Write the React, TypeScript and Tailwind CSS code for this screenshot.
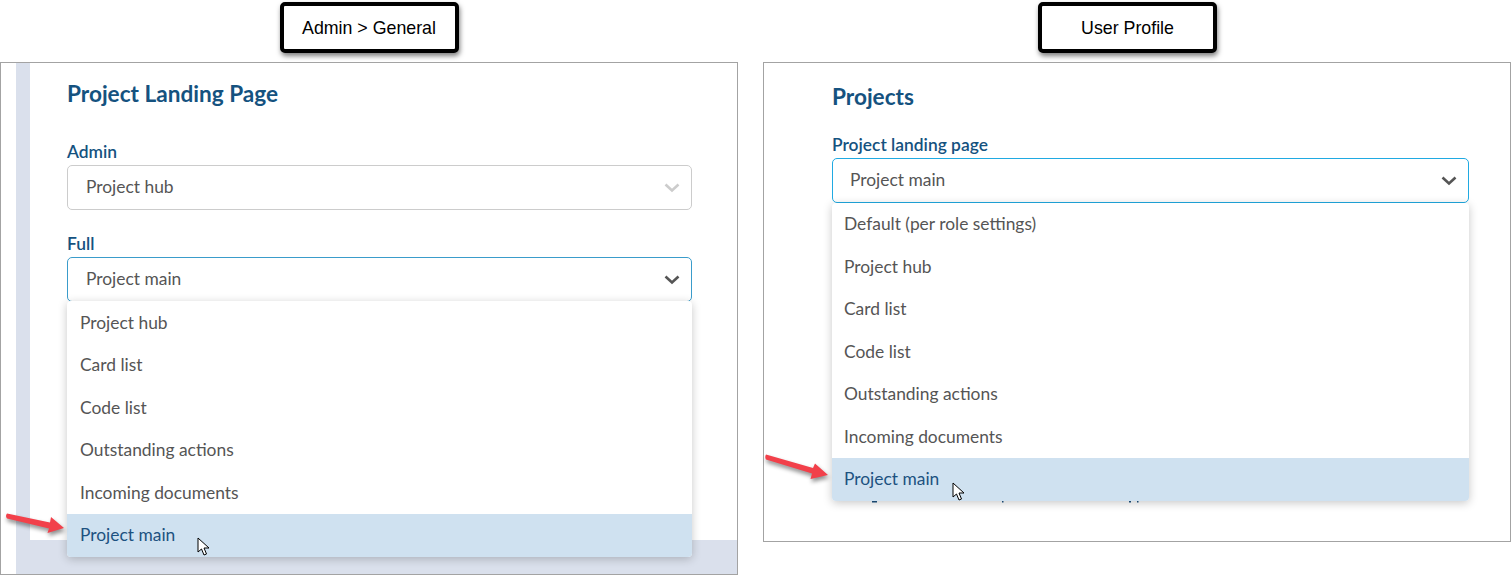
import { ReactNode } from 'react';

function Chevron({ className }: { className: string }) {
  return (
    <svg className={className} width="16" height="10" viewBox="0 0 16 10" fill="none" stroke="currentColor" strokeWidth={2.6}>
      <path d="M1.5 1.5 L8 7.5 L14.5 1.5" />
    </svg>
  );
}

// hand-drawn red annotation arrow
function RedArrow({ className, d }: { className: string; d: string }) {
  return (
    <svg className={`drop-shadow-[1px_3px_2px_rgba(0,0,0,0.45)] ${className}`} width="66" height="32" viewBox="0 0 66 32">
      <path d={d} fill="#f2404a" />
    </svg>
  );
}

function Cursor({ className }: { className: string }) {
  return (
    <svg className={className} width="14" height="20" viewBox="0 0 14 20">
      <path d="M1 1 L1 15 L4.5 12 L7 18 L9.5 17 L7 11 L12 11 Z" fill="#fff" stroke="#000" strokeWidth={1} />
    </svg>
  );
}

function Callout({ label, className }: { label: string; className: string }) {
  return (
    <div className={`flex h-[51px] w-[179px] items-center justify-center rounded-[5px] border-[4px] border-black bg-white pt-px font-['Liberation_Sans',sans-serif] text-[17.8px] text-black shadow-[1px_3px_5px_rgba(0,0,0,0.5)] ${className}`}>
      {label}
    </div>
  );
}

function Select({ value, className, active, children }: { value: string; className: string; active?: boolean; children?: ReactNode }) {
  return (
    <div className={`relative flex h-[45px] items-center justify-between rounded-[5px] border bg-white pr-[11px] ${className}`}>
      <span className="text-[#555555]">{value}</span>
      <Chevron className={active ? 'text-[#555555]' : 'text-[#cccccc]'} />
      {children}
    </div>
  );
}

function Menu({ items, selected, className, itemClass }: { items: string[]; selected: string; className: string; itemClass: string }) {
  return (
    <div className={`absolute -left-px -right-px z-10 rounded-[4px] bg-white shadow-[0_2px_10px_rgba(0,0,0,0.22)] ${className}`}>
      {items.map((item) => (
        <div
          key={item}
          className={`flex items-center ${itemClass} ${item === selected ? 'h-[43px] rounded-b-[4px] bg-[#cfe1f0] text-[#1d5280]' : 'h-[42.5px] text-[#555555]'}`}
        >
          {item}
        </div>
      ))}
    </div>
  );
}

export default function App() {
  return (
    <div className="flex h-[575px] w-[1511px] overflow-hidden bg-white font-['Lato',sans-serif] text-[17.4px]">
      {/* Admin > General */}
      <div className="w-[738px] shrink-0 pt-[2px]">
        <Callout label="Admin > General" className="mx-auto mb-[9px]" />
        <div className="relative flex h-[513px] flex-col border border-[#a3a3a3] bg-white">
          <div className="flex min-h-0 flex-1 pl-[15px]">
            <div className="w-[14px] bg-[#dae0ec]" />
            <div className="relative z-10 ml-[37px] w-[625px] pt-[15px]">
              <h2 className="text-[22.6px] font-bold leading-[32px] text-[#15527f]">Project Landing Page</h2>
              <div className="mb-[2px] mt-[31px] text-[17.4px] font-semibold leading-[22px] text-[#15527f]">Admin</div>
              <Select value="Project hub" className="border-[#cccccc] pl-[18px]" />
              <div className="mt-[21px] text-[17.4px] font-semibold leading-[26px] text-[#15527f]">Full</div>
              <Select value="Project main" active className="border-[#3a9ccb] pl-[18px]">
                <Menu
                  selected="Project main"
                  className="top-[43px]"
                  itemClass="pl-[13px] pt-px"
                  items={['Project hub', 'Card list', 'Code list', 'Outstanding actions', 'Incoming documents', 'Project main']}
                />
              </Select>
            </div>
          </div>
          <div className="ml-[15px] h-[34px] bg-[#dae0ec]" />
          <RedArrow className="absolute left-[3px] top-[447px] z-20" d="M3 3.5 L46 12.5 L47 7 L60 18 L43.5 23 L45 18.5 L3 8.5 Q1 6 3 3.5 Z" />
          <Cursor className="absolute left-[196px] top-[474px] z-20" />
        </div>
      </div>

      {/* User Profile */}
      <div className="ml-[25px] w-[748px] shrink-0 pt-[2px]">
        <Callout label="User Profile" className="mb-[9px] ml-[275px]" />
        <div className="relative h-[480px] border border-[#a3a3a3] bg-white">
          <div className="relative ml-[68px] w-[637px] pt-[18px]">
            <h2 className="text-[22.6px] font-bold leading-[32px] text-[#15527f]">Projects</h2>
            <div className="mt-[19px] text-[17.4px] font-semibold leading-[26px] text-[#15527f]">Project landing page</div>
            <Select value="Project main" active className="border-[#20aae2] pl-[17px]">
              <Menu
                selected="Project main"
                className="top-[44px]"
                itemClass="pl-3"
                items={['Default (per role settings)', 'Project hub', 'Card list', 'Code list', 'Outstanding actions', 'Incoming documents', 'Project main']}
              />
            </Select>
            {/* descenders of a line of text hidden behind the open menu */}
            <svg className="absolute left-[40px] top-[438px]" width="270" height="3" viewBox="0 0 270 3" fill="#1d5280">
              <rect x="0" y="0" width="5" height="1.5" />
              <rect x="130" y="0" width="1.5" height="1.5" />
              <rect x="257" y="0" width="2" height="1.5" />
              <rect x="265" y="0" width="1.5" height="1.5" />
            </svg>
          </div>
          <RedArrow className="absolute left-0 top-[390px] z-20" d="M2 1.5 L49 15 L51 10.5 L64 22 L46.5 26 L48 20.5 L2 6.5 Q0.5 4 2 1.5 Z" />
          <Cursor className="absolute left-[188px] top-[419px] z-20" />
        </div>
      </div>
    </div>
  );
}
